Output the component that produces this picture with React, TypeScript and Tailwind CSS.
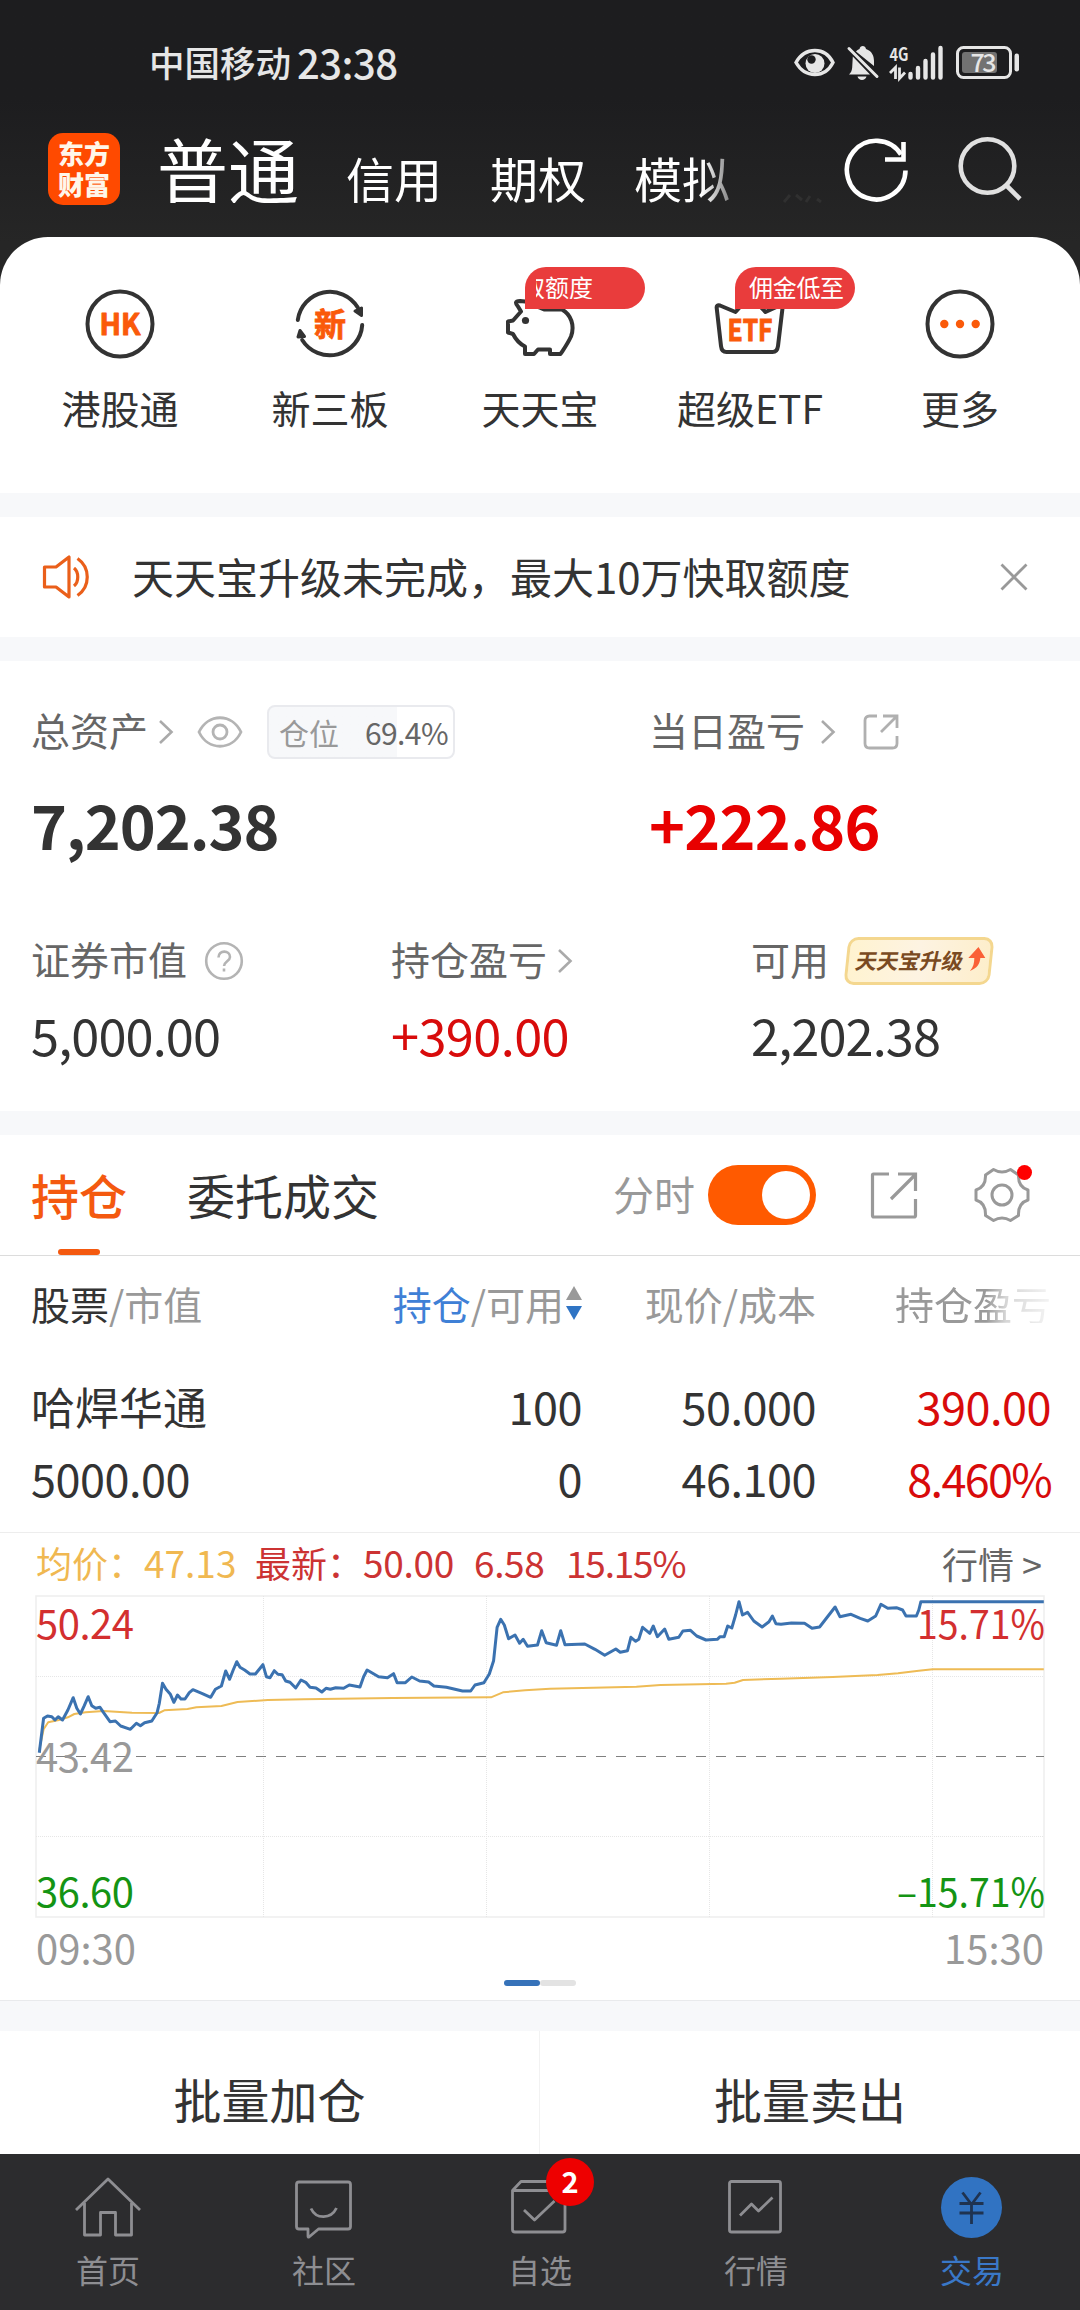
import { useState, type ReactNode } from 'react';

// 分时图坐标，画布 1008 x 321
const PRICE_LINE =
    '3.3,156.7 7.6,122.3 11.5,120 15.8,120.7 19,124 22.2,120.7 26.5,124 31.9,114 37.2,101.7 40.8,112.3 44.4,118 48.3,109.7 52.2,100.7 55.8,109.7 59.7,112.3 64,111.3 67.6,116.7 74,125.7 79.4,125 84.7,130 94.4,133.3 100.4,127.3 104.4,129.7 108.6,126.7 115.8,125 121.1,116.7 123.3,107.3 126.5,87.3 130,93.3 134.4,98.3 137.9,106.3 141.5,99 145,103 149,103 153.3,96.7 156.9,93.7 165.8,97.3 174.7,101.3 179.4,93.3 185.4,90 189.7,75 193.6,83.3 197.2,74 200.8,65.7 204,71.3 208.6,74 214,78 219.4,78 226.9,68.7 230.4,80.7 234,81.7 238.3,74.7 241.9,78.3 246.1,78.7 249.7,85 254,86.3 259.7,92 265,84 269.7,86.3 274,91.3 280,92 285.8,96 290,92.3 294.4,93.3 299.7,91.7 307.6,92.3 313.3,89 324,91 327.6,80.7 331.1,74 342.6,80.7 351.5,81.7 357.6,77.7 361.1,86.7 369.4,86.7 375.8,81 383.6,85 392.6,86 397.9,90 410.4,91.3 426.5,95 434.7,95 439,89 447.9,86.7 453.3,78 457.6,64.7 461.1,31.3 464.7,23.3 468.3,29 472.6,42.7 479,39 483.6,47.3 487.2,43.3 491.5,50.3 501.5,49 505.7,34.7 510.2,46.7 520.5,49.3 524.7,34.7 529,48.7 548.8,48 559,53.3 568.7,59.3 579.8,53 584.2,56.3 591.5,54.7 594.9,41.3 599.7,45.3 602.8,43.3 606.6,31.3 613.8,37.3 617.3,30 621.4,40.7 628.7,33 632.8,43.3 642.8,41.3 646.9,35 654.5,34.3 660.7,40 670,44 681.3,43.3 684.1,40.7 688.2,40.7 691.7,30 695.8,32 699.6,19 703,5.7 706.5,19 711.6,16.3 717.8,25 726.1,31 733,25.7 736.4,20 739.9,27.7 745,28.3 755.4,27 768.5,27.3 776,32.3 783.6,31 789.8,23 799.1,11 803.9,20.7 815,18.3 824.2,22.3 831.8,25 839.7,20 844.9,8.3 851.8,12.3 860.4,11.7 866.6,14 870,20 880.4,20 882.8,14 884.9,5.7 1007.8,5.7';
const AVG_LINE =
    '3.3,154 7.6,133.3 12.2,126.3 22.9,124 31.9,121.3 38.3,118 49.7,116.3 67.6,115 96,116.7 123,117 128.3,114.3 151.5,113 160.4,111.3 185.4,110 201.5,106 231.9,104 267.6,103.3 356.9,102 455,101.3 466.9,96.3 489,94.3 514,92.7 600.4,90.7 624.5,89 690,87.7 698.6,86.7 707,84 745,82.7 796.7,81 841.5,79 862,77.3 882.8,74.7 896.6,73.3 1007.8,73.3';

function StatusIcons() {
    return (
        <svg width="228" height="44" viewBox="792 40 228 44" fill="none">
            <path d="M796 61.5c9-16 29-16 37 0c-8 16-28 16-37 0z" stroke="#e6e6e6" strokeWidth="3.4" />
            <circle cx="815" cy="62.500" r="9.500" fill="#e6e6e6" />
            <circle cx="811.500" cy="58.500" r="4.200" fill="#1d1d1f" />
            <path d="M856 50.500c1-1 2-2 3.500-2.500c.5-4 6-4 6.500 0c6 2 8 7 8 12v5zM849 73.500c2-2 3-4 3.200-7l.6-11L870 73.500zM857.500 75.500h9c-1 4.500-8 4.500-9 0z" fill="#e6e6e6" />
            <path d="M849 47.500l28 28" stroke="#e6e6e6" strokeWidth="3" strokeLinecap="round" />
            <text x="889.500" y="59.500" fontSize="18" fontWeight="700" textLength="19" lengthAdjust="spacingAndGlyphs" fill="#e6e6e6">4G</text>
            <path d="M890 72l5.500-5.500V78M899.500 66.500V77.500l5.500-6" stroke="#e6e6e6" strokeWidth="2.800" />
            <path d="M910.500 73v3.500M918 67v9.500M925.500 60v16.500M933 53.500v23M940.500 47v29.500" stroke="#e6e6e6" strokeWidth="4.400" strokeLinecap="round" />
            <rect x="957.500" y="46.500" width="53" height="30" rx="6" stroke="#e6e6e6" strokeWidth="3" />
            <rect x="962" y="51" width="35" height="21" rx="3" fill="#727272" />
            <rect x="1014.500" y="52.500" width="4.500" height="18" rx="2.200" fill="#e6e6e6" />
            <text x="983.500" y="70.800" fontSize="25" fontWeight="500" textAnchor="middle" textLength="26" fill="#e6e6e6">73</text>
        </svg>
    );
}

function HkIcon() {
    return (
        <svg width="80" height="80" fill="none">
            <circle cx="40" cy="40" r="32.500" stroke="#333" strokeWidth="4" />
            <text x="40" y="50.800" fontSize="30" fontWeight="700" textAnchor="middle" textLength="41" lengthAdjust="spacingAndGlyphs" fill="#fa5a0a" stroke="#fa5a0a" strokeWidth="1" strokeLinejoin="round">HK</text>
        </svg>
    );
}

function NewBoardIcon() {
    return (
        <svg width="80" height="80" fill="none" stroke="#333" strokeWidth="4" strokeLinecap="round">
            <path d="M7.800 36a32.500 32.500 0 0 1 60-12.500M72.200 41a32.500 32.500 0 0 1-60 15" />
            <path d="M65 27l6.500-3v7.500zM8 53l2-6.500l4.500 6z" fill="#333" strokeLinejoin="round" strokeWidth="3" />
            <text x="40" y="51.500" fontSize="32" fontWeight="700" textAnchor="middle" fill="#fa5a0a" stroke="#fa5a0a" strokeWidth=".8">新</text>
        </svg>
    );
}

function PigIcon() {
    return (
        <svg width="80" height="80" fill="none" stroke="#333" strokeWidth="4" strokeLinejoin="round">
            <path d="M25 17.500l-5-.5c-5 0-5 2-2 5.500l3 5l-8 9l-5 1v11l5 1.500c3 6 6 9.500 12 12.500v7.500h9l4-4.500h12v4.500h10.500c4-6 7-10 10.500-17.500c4-11 0-22-9-27h-18z" />
            <circle cx="25.500" cy="36.500" r="3.600" fill="#333" stroke="none" />
        </svg>
    );
}

function EtfIcon() {
    return (
        <svg width="80" height="80" fill="none">
            <path d="M10 21.500c-2.600-.8-3.600.5-3.300 2.500L11 62c.4 4 2 6 5.500 6h46c3.500 0 5-2 5.500-6l5-42l-17.500 8L40 12L25.500 28z" stroke="#333" strokeWidth="4" strokeLinejoin="round" />
            <text x="40" y="57" fontSize="30" fontWeight="700" textAnchor="middle" textLength="45" lengthAdjust="spacingAndGlyphs" fill="#fa5a0a" stroke="#fa5a0a" strokeWidth="1">ETF</text>
        </svg>
    );
}

function MoreIcon() {
    return (
        <svg width="80" height="80" fill="none">
            <circle cx="40" cy="40" r="32.500" stroke="#333" strokeWidth="4" />
            <g fill="#fa5a0a">
                <circle cx="24.300" cy="40" r="4.200" />
                <circle cx="40" cy="40" r="4.200" />
                <circle cx="55.700" cy="40" r="4.200" />
            </g>
        </svg>
    );
}

function Chevron({ className = '' }: { className?: string }) {
    return (
        <svg width="16" height="26" fill="none" className={className}>
            <path d="M2 2l11.500 11L2 24" stroke="#aaa" strokeWidth="2.600" />
        </svg>
    );
}

const shortcuts = [
    { label: '港股通', icon: <HkIcon /> },
    { label: '新三板', icon: <NewBoardIcon /> },
    {
        label: '天天宝',
        icon: <PigIcon />,
        badge: <span className="-ml-[15px]">取额度</span>,
    },
    {
        label: '超级ETF',
        icon: <EtfIcon />,
        badge: <span className="ml-[3px] tracking-[-0.3px]">佣金低至</span>,
    },
    { label: '更多', icon: <MoreIcon /> },
];

function NavItem({ label, active, children }: { label: string; active?: boolean; children: ReactNode }) {
    return (
        <div className={'relative flex flex-col items-center pt-5 ' + (active ? 'text-[#3a78c8]' : 'text-[#8e8e92]')}>
            <svg width="72" height="66" fill="none" stroke="currentColor" strokeWidth="2.800" strokeLinejoin="round">
                {children}
            </svg>
            <span className="mt-[13px] text-[32px] leading-none">{label}</span>
        </div>
    );
}

export default function App() {
    const [intraday, setIntraday] = useState(true);

    return (
        <div className="flex h-[2310px] w-[1080px] flex-col overflow-hidden bg-[#f7f8fa] font-['Noto_Sans_CJK_SC',sans-serif] text-[#333]">
            <div className="h-[285px] shrink-0 bg-linear-to-b from-[#1d1d1f] from-35% to-[#262626] to-85% text-white">
                <div className="flex h-[123px] items-center pl-[149px] leading-none text-[#e6e6e6]">
                    <span className="text-[35.5px] font-medium">中国移动</span>
                    <span className="ml-1.5 text-[40px] font-medium tracking-[-0.5px]">23:38</span>
                    <div className="mt-0.5 ml-auto mr-[60px]">
                        <StatusIcons />
                    </div>
                </div>
                <div className="flex h-[92px] items-center pl-12">
                    <div className="flex size-[72px] flex-col items-center justify-center rounded-[15px] bg-[#ff4a00] pb-[3px] text-[26px] leading-[31px] font-black text-[#fff6ea]">
                        <span className="block h-[31px]">东方</span>
                        <span className="block h-[31px]">财富</span>
                    </div>
                    <div className="-mt-1 ml-[37px] flex w-[576px] items-baseline gap-12 leading-none whitespace-nowrap [mask-image:linear-gradient(to_right,#000_545px,rgba(0,0,0,0.4)_575px)]">
                        <span className="-mr-px text-[71px]">普通</span>
                        <span className="text-[48px]">信用</span>
                        <span className="text-[48px]">期权</span>
                        <span className="text-[48px]">模拟</span>
                    </div>
                    <svg width="40" height="10" fill="none" stroke="#303030" strokeWidth="3" className="mt-[58px] ml-[49px]">
                        <path d="M2 9l6-7M14 2l6 5M24 9l4-6M35 6l4 3" />
                    </svg>
                    <svg width="66" height="68" fill="none" stroke="#fff" strokeWidth="4.600" className="ml-[22px]">
                        <path d="M61.500 35.500a29.300 29.300 0 1 1-4.500-16" />
                        <path d="M41 24.500h18.500V7" />
                    </svg>
                    <svg width="66" height="68" fill="none" stroke="#e0e0e0" strokeWidth="4.600" className="ml-[46px]">
                        <circle cx="31.500" cy="31" r="26.800" />
                        <path d="M50 50l14 14" />
                    </svg>
                </div>
            </div>

            <div className="-mt-12 grid h-[256px] shrink-0 grid-cols-5 rounded-t-[48px] bg-white px-[15px] pt-[47px]">
                {shortcuts.map((item) => (
                    <div key={item.label} className="relative flex flex-col items-center">
                        {item.icon}
                        <span className="mt-6 text-[39px] leading-none whitespace-nowrap">{item.label}</span>
                        {item.badge && (
                            <div className="absolute -top-[17px] left-[90px] flex h-[42px] w-[120px] items-center rounded-[21px] rounded-bl-none bg-[#e93c3c] pb-0.5 pl-[11px] text-[24px] leading-none text-white">
                                <div className="w-[98px] overflow-hidden whitespace-nowrap">{item.badge}</div>
                            </div>
                        )}
                    </div>
                ))}
            </div>

            <div className="mt-6 flex h-[120px] shrink-0 items-center bg-white pl-[41px]">
                <svg width="50" height="46" fill="none" stroke="#ea5f1a" strokeWidth="3.200" strokeLinejoin="round">
                    <path d="M28 3v40L15 33H3.500V13H15zM33 14c5 4 5 14 0 18M36.500 4.500c13 9 13 28 0 37" />
                </svg>
                <span className="-mt-0.5 ml-[41px] text-[42px] leading-none">天天宝升级未完成，最大10万快取额度</span>
                <svg width="28" height="28" fill="none" stroke="#999" strokeWidth="2.800" className="ml-auto mr-[52px]">
                    <path d="M1.500 1.500l25 25M26.500 1.500l-25 25" />
                </svg>
            </div>

            <div className="mt-6 h-[450px] shrink-0 bg-white pt-[38px] pl-[31px] leading-none">
                <div className="flex">
                    <div className="w-[618px]">
                        <div className="flex h-[66px] items-center text-[39px] text-[#666]">
                            <span className="-mt-[5px]">总资产</span>
                            <Chevron className="ml-[10px]" />
                            <svg width="46" height="32" fill="none" stroke="#b4b4b4" strokeWidth="2.800" className="ml-[23px]">
                                <path d="M2 16c9-19 33-19 42 0c-9 19-33 19-42 0z" />
                                <circle cx="23" cy="16" r="7" />
                            </svg>
                            <div className="ml-6 flex h-[54px] w-[188px] items-center rounded-[8px] border-2 border-[#e9eaee] bg-linear-to-r from-[#f7f8fa] from-[69.400%] to-white to-[69.400%] pl-[10px] text-[30px]">
                                <span className="text-[#999]">仓位</span>
                                <span className="ml-[26px] tracking-[-0.6px]">69.4%</span>
                            </div>
                        </div>
                        <div className="mt-7 text-[61px] font-bold tracking-[-1px]">7,202.38</div>
                    </div>
                    <div>
                        <div className="flex h-[66px] items-center text-[39px] text-[#666]">
                            <span className="-mt-[5px]">当日盈亏</span>
                            <Chevron className="ml-[15px]" />
                            <svg width="36" height="36" fill="none" stroke="#b0b0b0" strokeWidth="2.800" className="ml-[27px]">
                                <path d="M14 2H6.500Q2 2 2 6.500v23Q2 34 6.500 34h23Q34 34 34 29.500V22M20 2h14v12M33 3L18 18" />
                            </svg>
                        </div>
                        <div className="mt-7 text-[61px] font-bold tracking-[-0.7px] text-[#e80000]">+222.86</div>
                    </div>
                </div>
                <div className="mt-[74px] grid grid-cols-[360px_360px_320px]">
                    <div>
                        <div className="flex h-[66px] items-center text-[39px] text-[#666]">
                            <span className="-mt-[5px]">证券市值</span>
                            <svg width="40" height="40" fill="none" stroke="#b4b4b4" strokeWidth="2.600" className="ml-[17px]">
                                <circle cx="20" cy="20" r="17.800" />
                                <path d="M14.500 16.500c0-8 11.500-7.500 11.500-.5c0 4-6 4.500-6 9M20 27.500v3" />
                            </svg>
                        </div>
                        <div className="mt-[15px] text-[50.5px] tracking-[-0.9px]">5,000.00</div>
                    </div>
                    <div>
                        <div className="flex h-[66px] items-center text-[39px] text-[#666]">
                            <span className="-mt-[5px]">持仓盈亏</span>
                            <Chevron className="ml-[10px]" />
                        </div>
                        <div className="mt-[15px] text-[50.5px] tracking-[-0.6px] text-[#d80b0b]">+390.00</div>
                    </div>
                    <div>
                        <div className="flex h-[66px] items-center text-[39px] text-[#666]">
                            <span className="-mt-[5px]">可用</span>
                            <div className="ml-[17px] flex h-[48px] w-[146px] -skew-x-6 items-center rounded-[10px] border-[3px] border-[#f4d78f] bg-linear-to-r from-[#fff3d0] via-[#fdf3e2] to-[#fdeecb] pl-[7px] text-[21.5px] font-bold text-[#7a4a22]">
                                <span className="-mt-0.5 -skew-x-6 whitespace-nowrap">天天宝升级</span>
                                <svg width="20" height="28" className="-mt-1 ml-0.5">
                                    <path d="M11 2l8 11h-5c0 6-2 10-9 13c3-4 3.500-8 3-13H2z" fill="#fa6037" />
                                </svg>
                            </div>
                        </div>
                        <div className="mt-[15px] text-[50.5px] tracking-[-0.9px]">2,202.38</div>
                    </div>
                </div>
            </div>

            <div className="mt-6 shrink-0 bg-white leading-none">
                <div className="flex h-[121px] items-center border-b border-[#dcdcdc] pl-[31px] text-[48px]">
                    <div className="relative flex h-full items-center pb-[3px] font-medium text-[#f4590f]">
                        持仓
                        <span className="absolute bottom-0 left-[27px] h-1.5 w-[42px] rounded-full bg-[#f4590f]" />
                    </div>
                    <span className="-mt-[3px] ml-[60px]">委托成交</span>
                    <span className="-mt-[3px] ml-auto text-[41px] text-[#999]">分时</span>
                    <button
                        onClick={() => setIntraday(!intraday)}
                        className={'ml-[13px] flex h-[60px] w-[108px] items-center rounded-full px-1.5 ' + (intraday ? 'justify-end bg-[#ff5a00]' : 'bg-[#ccc]')}
                    >
                        <span className="size-12 rounded-full bg-white" />
                    </button>
                    <svg width="48" height="48" fill="none" stroke="#999" strokeWidth="3.200" className="ml-[54px]">
                        <path d="M19 3H3.500Q2.500 3 2.500 4v40.500Q2.500 46 4 46h40q1.500 0 1.500-1.500V28M28 3h17.500v17M45 4L21 28" />
                    </svg>
                    <div className="relative mr-[49px] ml-[55px]">
                        <svg width="58" height="58" fill="none" stroke="#999" strokeWidth="3" strokeLinejoin="round">
                            <path d="M20.500 3.500q8.500 5 17 0l8 5.500q-.5 12 9.500 15v10q-10 3-9.500 15.500l-8 5q-8.500-5-17 0l-8-5Q13 37 3 34V24q10-3 9.500-15z" />
                            <circle cx="29" cy="29" r="10" />
                        </svg>
                        <span className="absolute -top-[1px] right-[-1px] size-[15px] rounded-full bg-[#ff0000]" />
                    </div>
                </div>

                <div className="grid h-[96px] grid-cols-[281px_270px_234px_235px] items-center pb-0.5 pl-[31px] text-[39px] text-[#999]">
                    <span>
                        <span className="text-[#333]">股票</span>/市值
                    </span>
                    <span className="flex items-center justify-end">
                        <span className="text-[#3f80d6]">持仓</span>/可用
                        <svg width="16" height="34" className="ml-0.5">
                            <path d="M8 0l8 14H0z" fill="#999" />
                            <path d="M8 34l8-14H0z" fill="#2f74c4" />
                        </svg>
                    </span>
                    <span className="text-right">现价/成本</span>
                    <span className="pl-[79px] whitespace-nowrap [mask-image:linear-gradient(to_right,#000_170px,rgba(0,0,0,0.4)_190px,rgba(0,0,0,0.1)_235px)]">持仓盈亏</span>
                </div>
                <div className="grid grid-cols-[281px_270px_234px_235px] border-b border-[#ededed] pt-[18px] pb-[18px] pl-[31px] text-right text-[45px] leading-[72px] tracking-[-0.5px]">
                    <span className="text-left text-[44px] tracking-normal">哈焊华通</span>
                    <span>100</span>
                    <span>50.000</span>
                    <span className="text-[#d80b0b]">390.00</span>
                    <span className="text-left">5000.00</span>
                    <span>0</span>
                    <span>46.100</span>
                    <span className="tracking-[-1.7px] text-[#d80b0b]">8.460%</span>
                </div>

                <div className="flex h-[62px] items-center pr-[38px] pb-[3px] pl-9 text-[36px] text-[#cc3333]">
                    <span className="w-[219px] text-[#f0b851]">均价：<span className="text-[37px]">47.13</span></span>
                    <span className="w-[219px]">最新：<span className="text-[37px] tracking-[-0.3px]">50.00</span></span>
                    <span className="w-[92px] text-[37px] tracking-[-0.4px]">6.58</span>
                    <span className="text-[37px] tracking-[-1.2px]">15.15%</span>
                    <span className="ml-auto text-[#666]">行情 &gt;</span>
                </div>
                <svg width="1008" height="323" viewBox="0 -1 1008 323" fill="none" className="ml-9 block overflow-visible">
                    <rect x="0" y="0" width="1008" height="321" stroke="#efefef" strokeWidth="1.600" />
                    <path d="M227.500 0v321M450.500 0v321M673.500 0v321M896.500 0v321M0 80.500h1008M0 240.500h1008" stroke="#e6e6e6" strokeDasharray="1 1" />
                    <path d="M0 160.500h1008" stroke="#808080" strokeDasharray="10 10" />
                    <g fontSize="40">
                        <text x="0" y="42.500" textLength="98" fill="#d32f2f">50.24</text>
                        <text x="0" y="176" textLength="98" fill="#999">43.42</text>
                        <text x="0" y="311" textLength="98" fill="#149414">36.60</text>
                        <text x="881" y="42.500" textLength="128" lengthAdjust="spacingAndGlyphs" fill="#d32f2f">15.71%</text>
                        <text x="861" y="311" textLength="148" lengthAdjust="spacingAndGlyphs" fill="#149414">–15.71%</text>
                    </g>
                    <polyline points={AVG_LINE} stroke="#eebb55" strokeWidth="2" strokeLinejoin="round" />
                    <polyline points={PRICE_LINE} stroke="#3b72b0" strokeWidth="3" strokeLinejoin="round" />
                </svg>
                <div className="flex h-[57px] items-center justify-between px-9 text-[40px] text-[#999]">
                    <span>09:30</span>
                    <span>15:30</span>
                </div>
                <div className="flex h-[26px] justify-center border-b border-[#e9eaec] pt-[5px]">
                    <span className="h-1.5 w-9 rounded-full bg-[#3672b9]" />
                    <span className="h-1.5 w-9 rounded-full bg-[#e3e3e3]" />
                </div>
            </div>

            <div className="mt-[30px] grid h-[123px] shrink-0 grid-cols-2 bg-white text-center text-[48px] leading-none">
                <div className="border-r border-[#f2f2f2] pt-[43px]">批量加仓</div>
                <div className="pt-[43px]">批量卖出</div>
            </div>

            <div className="relative grid h-[156px] shrink-0 grid-cols-5 bg-[#2c2c2e]">
                <NavItem label="首页">
                    <path d="M4 36L36 5l32 31M12.500 29v32h16V38.500h15V61h16V29" />
                </NavItem>
                <NavItem label="社区">
                    <path d="M11 8h49q2.500 0 2.500 2.500v42q0 2.500-2.500 2.500H30.500L21 63q-1 .5-1-1V55h-9q-2.500 0-2.500-2.500v-42Q8.500 8 11 8zM23 34.500c5 11 20 11 25.500-.5" />
                </NavItem>
                <NavItem label="自选">
                    <path d="M8.500 16.500v39q0 2.500 2.500 2.500h47.500q2.500 0 2.500-2.500v-39l-7.500-9H17l-8.500 9H61M20 36l10.500 10l20-19" />
                </NavItem>
                <NavItem label="行情">
                    <rect x="9.500" y="7.500" width="51" height="50.500" rx="2" />
                    <path d="M20 41.500L31.500 30l7 7l14-13.500" />
                </NavItem>
                <NavItem label="交易" active>
                    <circle cx="35.500" cy="33.500" r="30.500" fill="#3173c2" stroke="none" />
                    <path d="M26.500 18.500l9 12l9-12M35.500 30v20M23.500 29.500h24M23.500 39h24" stroke="#1f3350" />
                </NavItem>
                <span className="absolute top-1 left-[546px] flex size-12 items-center justify-center rounded-full bg-[#ee0000] pb-1 text-[29px] leading-none font-bold text-white">2</span>
            </div>
        </div>
    );
}
